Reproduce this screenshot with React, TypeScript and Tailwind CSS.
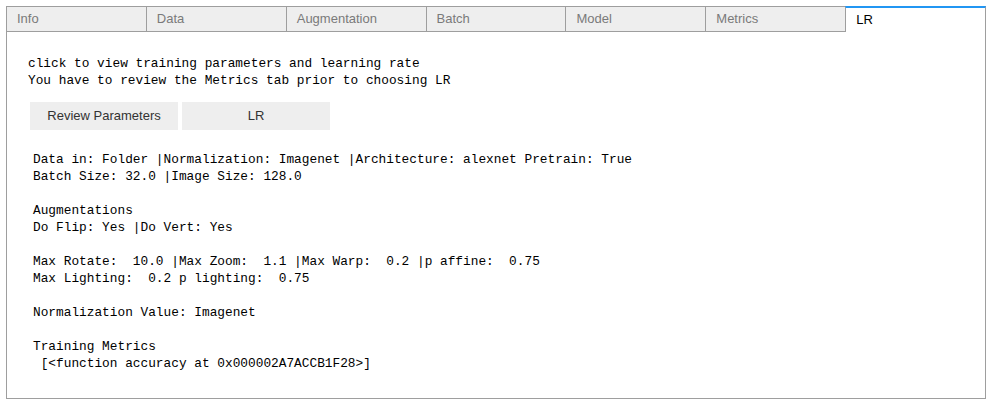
const tabs = ["Info", "Data", "Augmentation", "Batch", "Model", "Metrics", "LR"];

const lines = [
  "Data in: Folder |Normalization: Imagenet |Architecture: alexnet Pretrain: True",
  "Batch Size: 32.0 |Image Size: 128.0",
  "",
  "Augmentations",
  "Do Flip: Yes |Do Vert: Yes",
  "",
  "Max Rotate:  10.0 |Max Zoom:  1.1 |Max Warp:  0.2 |p affine:  0.75",
  "Max Lighting:  0.2 p lighting:  0.75",
  "",
  "Normalization Value: Imagenet",
  "",
  "Training Metrics",
  " [<function accuracy at 0x000002A7ACCB1F28>]",
];

function Tab({ label, active, first }: { label: string; active: boolean; first: boolean }) {
  if (active) {
    return (
      <div
        className={`h-[26px] w-[141px] ${first ? "" : "-ml-px"} flex items-center pl-[10px] border-x border-[#9e9e9e] border-t-2 border-t-[#2196f3] bg-white text-black`}
      >
        {label}
      </div>
    );
  }
  return (
    <div
      className={`h-[26px] w-[141px] ${first ? "" : "-ml-px"} flex items-center pl-[10px] border border-[#9e9e9e] bg-[#eeeeee] text-[#7a7a7a]`}
    >
      {label}
    </div>
  );
}

export default function App() {
  return (
    <div
      className="w-[994px] h-[408px] bg-white pt-[6px] pl-[6px] text-[13px]"
      style={{ fontFamily: '"Liberation Sans", Arial, sans-serif' }}
    >
      <div className="w-[980px]">
        <div className="flex">
          {tabs.map((t, i) => (
            <Tab key={t} label={t} active={t === "LR"} first={i === 0} />
          ))}
        </div>
        <div className="h-[367px] border-x border-b border-[#9e9e9e] pt-[23px] pl-[21px]">
          <div
            className="text-[12.8px] leading-[17px] text-black whitespace-pre"
            style={{ fontFamily: '"Liberation Mono", "DejaVu Sans Mono", monospace' }}
          >
            <div>click to view training parameters and learning rate</div>
            <div>You have to review the Metrics tab prior to choosing LR</div>
          </div>
          <div className="flex gap-[4px] mt-[13px] ml-[2px]">
            <button className="w-[148px] h-[28px] bg-[#eeeeee] text-[#333] text-[13px]">
              Review Parameters
            </button>
            <button className="w-[148px] h-[28px] bg-[#eeeeee] text-[#333] text-[13px]">LR</button>
          </div>
          <div
            className="mt-[21px] pl-[5px] text-[12.8px] leading-[17px] text-black whitespace-pre"
            style={{ fontFamily: '"Liberation Mono", "DejaVu Sans Mono", monospace' }}
          >
            {lines.map((l, i) => (
              <div key={i} className="h-[17px]">
                {l}
              </div>
            ))}
          </div>
        </div>
      </div>
    </div>
  );
}
